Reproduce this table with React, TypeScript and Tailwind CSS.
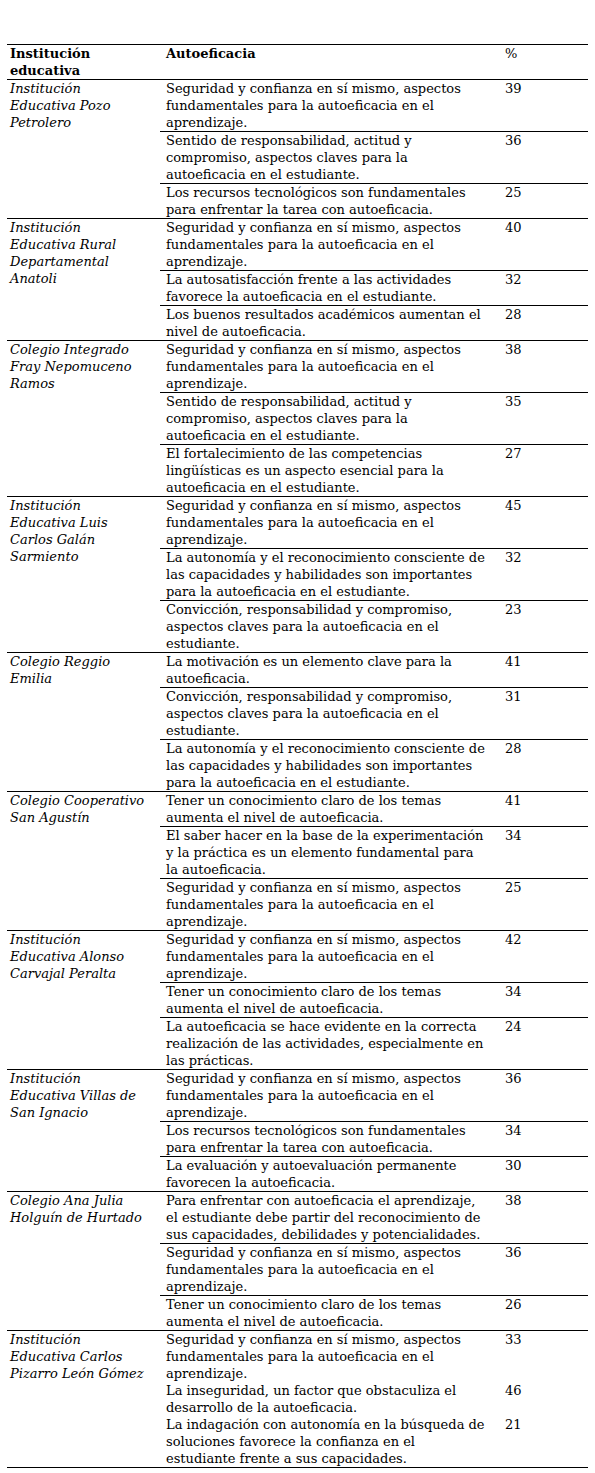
type Item = { lines: string[]; pct: string };
type Group = { name: string[]; items: Item[]; plain?: boolean };

const seguridad = [
  "Seguridad y confianza en sí mismo, aspectos",
  "fundamentales para la autoeficacia en el",
  "aprendizaje.",
];
const sentido = [
  "Sentido de responsabilidad, actitud y",
  "compromiso, aspectos claves para la",
  "autoeficacia en el estudiante.",
];
const recursos = [
  "Los recursos tecnológicos son fundamentales",
  "para enfrentar la tarea con autoeficacia.",
];
const autonomia = [
  "La autonomía y el reconocimiento consciente de",
  "las capacidades y habilidades son importantes",
  "para la autoeficacia en el estudiante.",
];
const conviccion = [
  "Convicción, responsabilidad y compromiso,",
  "aspectos claves para la autoeficacia en el",
  "estudiante.",
];
const tener = [
  "Tener un conocimiento claro de los temas",
  "aumenta el nivel de autoeficacia.",
];

const groups: Group[] = [
  {
    name: ["Institución", "Educativa Pozo", "Petrolero"],
    items: [
      { lines: seguridad, pct: "39" },
      { lines: sentido, pct: "36" },
      { lines: recursos, pct: "25" },
    ],
  },
  {
    name: ["Institución", "Educativa Rural", "Departamental", "Anatoli"],
    items: [
      { lines: seguridad, pct: "40" },
      {
        lines: [
          "La autosatisfacción frente a las actividades",
          "favorece la autoeficacia en el estudiante.",
        ],
        pct: "32",
      },
      {
        lines: ["Los buenos resultados académicos aumentan el", "nivel de autoeficacia."],
        pct: "28",
      },
    ],
  },
  {
    name: ["Colegio Integrado", "Fray Nepomuceno", "Ramos"],
    items: [
      { lines: seguridad, pct: "38" },
      { lines: sentido, pct: "35" },
      {
        lines: [
          "El fortalecimiento de las competencias",
          "lingüísticas es un aspecto esencial para la",
          "autoeficacia en el estudiante.",
        ],
        pct: "27",
      },
    ],
  },
  {
    name: ["Institución", "Educativa Luis", "Carlos Galán", "Sarmiento"],
    items: [
      { lines: seguridad, pct: "45" },
      { lines: autonomia, pct: "32" },
      { lines: conviccion, pct: "23" },
    ],
  },
  {
    name: ["Colegio Reggio", "Emilia"],
    items: [
      { lines: ["La motivación es un elemento clave para la", "autoeficacia."], pct: "41" },
      { lines: conviccion, pct: "31" },
      { lines: autonomia, pct: "28" },
    ],
  },
  {
    name: ["Colegio Cooperativo", "San Agustín"],
    items: [
      { lines: tener, pct: "41" },
      {
        lines: [
          "El saber hacer en la base de la experimentación",
          "y la práctica es un elemento fundamental para",
          "la autoeficacia.",
        ],
        pct: "34",
      },
      { lines: seguridad, pct: "25" },
    ],
  },
  {
    name: ["Institución", "Educativa Alonso", "Carvajal Peralta"],
    items: [
      { lines: seguridad, pct: "42" },
      { lines: tener, pct: "34" },
      {
        lines: [
          "La autoeficacia se hace evidente en la correcta",
          "realización de las actividades, especialmente en",
          "las prácticas.",
        ],
        pct: "24",
      },
    ],
  },
  {
    name: ["Institución", "Educativa Villas de", "San Ignacio"],
    items: [
      { lines: seguridad, pct: "36" },
      { lines: recursos, pct: "34" },
      {
        lines: ["La evaluación y autoevaluación permanente", "favorecen la autoeficacia."],
        pct: "30",
      },
    ],
  },
  {
    name: ["Colegio Ana Julia", "Holguín de Hurtado"],
    items: [
      {
        lines: [
          "Para enfrentar con autoeficacia el aprendizaje,",
          "el estudiante debe partir del reconocimiento de",
          "sus capacidades, debilidades y potencialidades.",
        ],
        pct: "38",
      },
      { lines: seguridad, pct: "36" },
      { lines: tener, pct: "26" },
    ],
  },
  {
    name: ["Institución", "Educativa Carlos", "Pizarro León Gómez"],
    plain: true,
    items: [
      { lines: seguridad, pct: "33" },
      {
        lines: ["La inseguridad, un factor que obstaculiza el", "desarrollo de la autoeficacia."],
        pct: "46",
      },
      {
        lines: [
          "La indagación con autonomía en la búsqueda de",
          "soluciones favorece la confianza en el",
          "estudiante frente a sus capacidades.",
        ],
        pct: "21",
      },
    ],
  },
];

const Lines = ({ lines }: { lines: string[] }) => (
  <>
    {lines.map((l, i) => (
      <div key={i} className="whitespace-nowrap">
        {l}
      </div>
    ))}
  </>
);

export default function App() {
  return (
    <div className="min-h-[1473px] w-[595px] bg-white pt-[44px] font-['DejaVu_Serif',serif] text-[13px] leading-[17px] text-black">
      <div className="ml-[7px] w-[581px] border-t border-black">
        {/* header */}
        <div className="flex border-b border-black">
          <div className="w-[153px] pl-[3px] font-bold">
            <Lines lines={["Institución", "educativa"]} />
          </div>
          <div className="w-[340px] pl-[6px] font-bold">Autoeficacia</div>
          <div className="flex-1 pl-[5px]">%</div>
        </div>

        {groups.map((g, gi) => (
          <div key={gi} className="flex border-b border-black">
            <div className="w-[153px] pl-[3px] italic">
              <Lines lines={g.name} />
            </div>
            <div className={g.plain ? "flex-1" : "flex-1 divide-y divide-black"}>
              {g.items.map((it, ii) => (
                <div key={ii} className="flex">
                  <div className="w-[340px] pl-[6px]">
                    <Lines lines={it.lines} />
                  </div>
                  <div className="flex-1 pl-[5px]">{it.pct}</div>
                </div>
              ))}
            </div>
          </div>
        ))}
      </div>
    </div>
  );
}
